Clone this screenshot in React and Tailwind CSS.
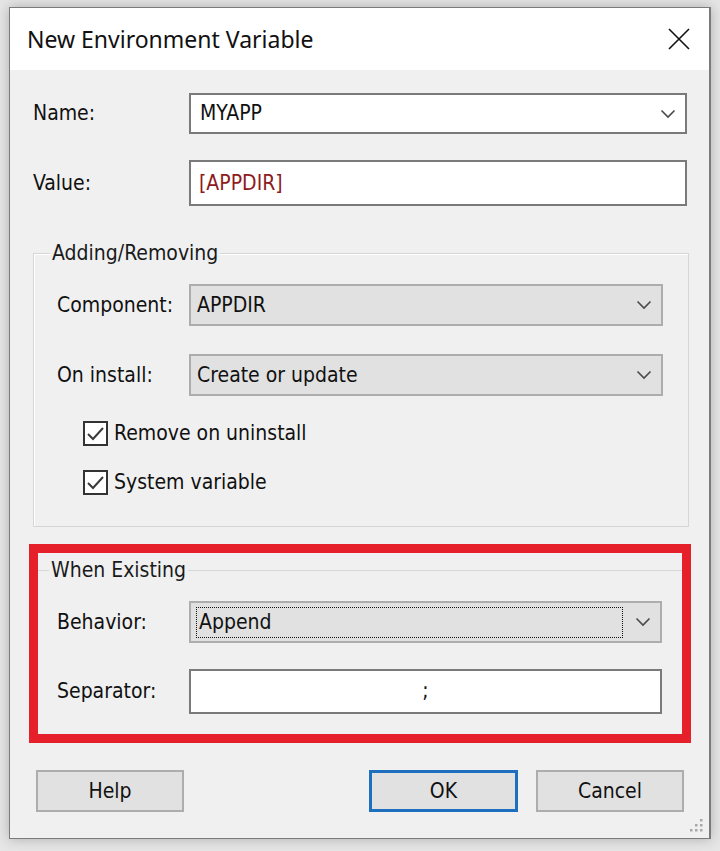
import React from 'react';

const uiFont = { fontFamily: '"DejaVu Sans Condensed", "DejaVu Sans", Tahoma, sans-serif' };

const Chevron = () => (
    <svg width="16" height="10" viewBox="0 0 16 10" className="shrink-0">
        <path d="M1.5 1.5 L8 8 L14.5 1.5" fill="none" stroke="#4a4a4a" strokeWidth="1.6" />
    </svg>
);

const Check = () => (
    <div className="w-[25px] h-[25px] border-2 border-[#333] bg-white flex items-center justify-center shrink-0">
        <svg width="19" height="17" viewBox="0 0 19 17">
            <path d="M2 9 L7 14 L17 3" fill="none" stroke="#3a3a3a" strokeWidth="2" />
        </svg>
    </div>
);

const GroupLabel = ({ left, children }) => (
    <span className={`absolute top-[-13px] bg-[#f0f0f0] px-[2px] leading-[24px] text-[21px] text-[#1a1a1a] ${left}`}>
        {children}
    </span>
);

const App = () => {
    return (
        <div className="w-[720px] h-[851px] bg-[#e6e6e6] pt-[7px] pl-[9px]" style={uiFont}>
            <div className="w-[702px] h-[832px] border border-[#7b7b7b] border-r-2 bg-[#f0f0f0] shadow-[0_0_12px_rgba(0,0,0,0.25)] flex flex-col">
                {/* title bar */}
                <div className="h-[62px] bg-white flex items-center justify-between pl-[17px] pr-[18px] shrink-0">
                    <span className="text-[23px] text-[#111]" style={{ fontFamily: '"Noto Sans", "Open Sans", sans-serif' }}>
                        New Environment Variable
                    </span>
                    <svg width="24" height="24" viewBox="0 0 24 24">
                        <path d="M2 2 L22 22 M22 2 L2 22" stroke="#111" strokeWidth="1.6" />
                    </svg>
                </div>

                <div className="pl-[23px] pr-[22px] pt-[23px] text-[21px] text-[#111] leading-none">
                    <div className="flex items-center">
                        <span className="w-[156px]">Name:</span>
                        <div className="w-[498px] h-[41px] bg-white border-2 border-[#7a7a7a] flex items-center justify-between pl-[9px] pr-[9px]">
                            <span>MYAPP</span>
                            <Chevron />
                        </div>
                    </div>
                    <div className="flex items-center mt-[26px]">
                        <span className="w-[156px]">Value:</span>
                        <div className="w-[498px] h-[46px] bg-white border-2 border-[#7a7a7a] flex items-center pl-[8px] text-[#8e1a22]">
                            [APPDIR]
                        </div>
                    </div>

                    {/* Adding/Removing */}
                    <div className="relative w-[656px] mt-[47px] border border-[#d6d6d6] shadow-[inset_1px_1px_0_#fff] pl-[23px] pr-[25px] pt-[30px] pb-[31px]">
                        <GroupLabel left="left-[16px]">Adding/Removing</GroupLabel>
                        <div className="flex items-center">
                            <span className="w-[132px]">Component:</span>
                            <div className="w-[474px] h-[42px] bg-[#e1e1e1] border-2 border-[#adadad] flex items-center justify-between pl-[6px] pr-[9px]">
                                <span>APPDIR</span>
                                <Chevron />
                            </div>
                        </div>
                        <div className="flex items-center mt-[28px]">
                            <span className="w-[132px]">On install:</span>
                            <div className="w-[474px] h-[42px] bg-[#e1e1e1] border-2 border-[#adadad] flex items-center justify-between pl-[6px] pr-[9px]">
                                <span>Create or update</span>
                                <Chevron />
                            </div>
                        </div>
                        <div className="flex items-center gap-[6px] mt-[25px] ml-[26px]">
                            <Check />
                            <span>Remove on uninstall</span>
                        </div>
                        <div className="flex items-center gap-[6px] mt-[24px] ml-[26px]">
                            <Check />
                            <span>System variable</span>
                        </div>
                    </div>

                    {/* When Existing, highlighted */}
                    <div className="w-[662px] -ml-[4px] mt-[17px] border-[9px] border-[#e5202a] pt-[17px] pb-[20px]">
                        <div className="relative border-t border-[#d6d6d6] pl-[19px] pr-[19px] pt-[30px]">
                            <GroupLabel left="left-[11px]">When Existing</GroupLabel>
                            <div className="flex items-center">
                                <span className="w-[132px]">Behavior:</span>
                                <div className="w-[473px] h-[42px] bg-[#e1e1e1] border-2 border-[#adadad] flex items-center justify-between pl-[5px] pr-[9px]">
                                    <div className="w-[427px] h-[31px] border border-dotted border-[#111] flex items-center pl-[2px]">
                                        Append
                                    </div>
                                    <Chevron />
                                </div>
                            </div>
                            <div className="flex items-center mt-[26px]">
                                <span className="w-[132px]">Separator:</span>
                                <div className="w-[473px] h-[45px] bg-white border-2 border-[#7a7a7a] flex items-center justify-center">
                                    ;
                                </div>
                            </div>
                        </div>
                    </div>

                    {/* buttons */}
                    <div className="flex items-center mt-[27px] pl-[3px]">
                        <button className="w-[148px] h-[42px] bg-[#e1e1e1] border-2 border-[#adadad] text-[21px]">Help</button>
                        <button className="w-[149px] h-[42px] ml-[185px] bg-[#e1e1e1] border-[3px] border-[#1f6fbf] text-[21px]">OK</button>
                        <button className="w-[148px] h-[42px] ml-[18px] bg-[#e1e1e1] border-2 border-[#adadad] text-[21px]">Cancel</button>
                    </div>
                </div>

                <div className="flex-1 flex items-end justify-end pr-[5px] pb-[5px]">
                    <svg width="16" height="16" viewBox="0 0 16 16">
                        {[[13, 3], [13, 8], [8, 8], [13, 13], [8, 13], [3, 13]].map(([x, y]) => (
                            <rect key={x + '-' + y} x={x - 1} y={y - 1} width="2.5" height="2.5" fill="#a8a8a8" />
                        ))}
                    </svg>
                </div>
            </div>
        </div>
    );
};

export default App;
